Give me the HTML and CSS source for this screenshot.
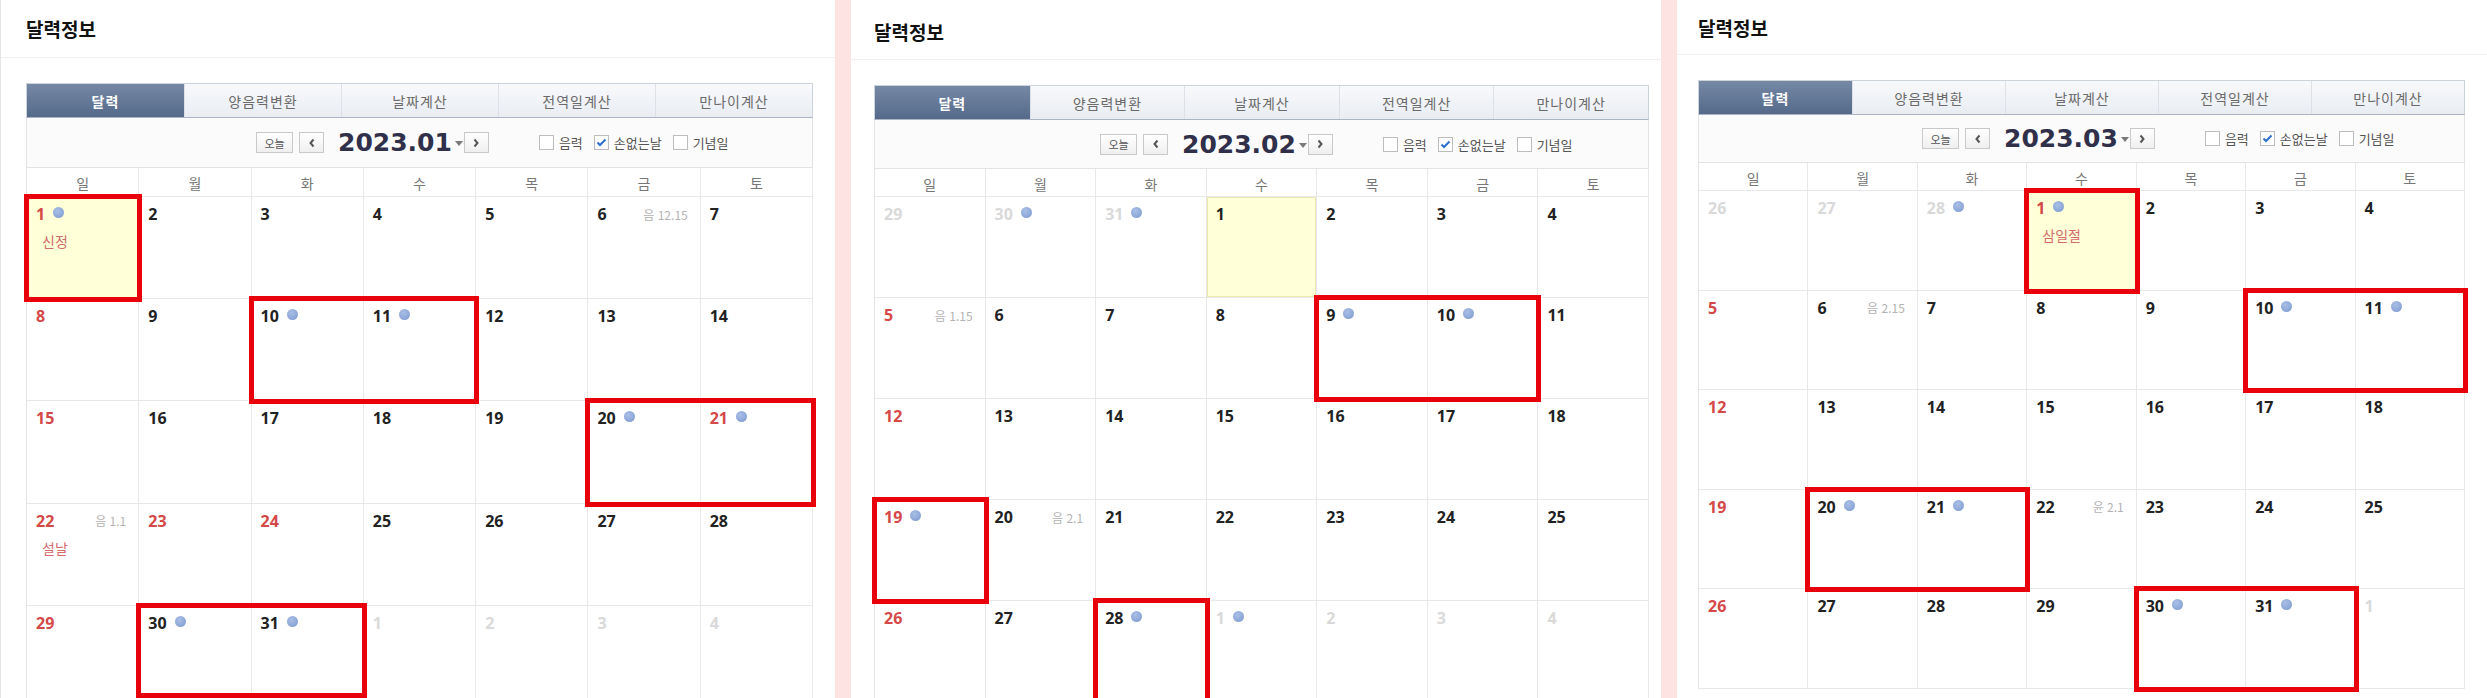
FILE: index.html
```html
<!DOCTYPE html>
<html lang="ko">
    <head>
        <meta charset="UTF-8" />
        <meta name="viewport" content="width=device-width, initial-scale=1.0" />
        <title>달력정보</title>
        <link rel="stylesheet" href="styles.css">
    </head>
    <body>
        <div class="board">
            <section class="panel panel-jan" data-year="2023" data-month="1"></section>
            <section class="panel panel-feb" data-year="2023" data-month="2"></section>
            <section class="panel panel-mar" data-year="2023" data-month="3"></section>
        </div>

        <!-- 패널 하나의 틀 -->
        <template id="panel-tpl">
            <h2 class="panel-title">달력정보</h2>
            <div class="panel-body">
                <ul class="tabs">
                    <li class="tab active">달력</li>
                    <li class="tab">양음력변환</li>
                    <li class="tab">날짜계산</li>
                    <li class="tab">전역일계산</li>
                    <li class="tab">만나이계산</li>
                </ul>
                <div class="toolbar">
                    <button class="btn btn-today">오늘</button>
                    <button class="btn btn-arrow btn-prev">
                        <svg width="8" height="10" viewBox="0 0 8 10"><polyline points="5.5,1.5 2.5,5 5.5,8.5" fill="none" stroke="#555" stroke-width="2" /></svg>
                    </button>
                    <strong class="cur-month"></strong>
                    <span class="caret"></span>
                    <button class="btn btn-arrow">
                        <svg width="8" height="10" viewBox="0 0 8 10"><polyline points="2.5,1.5 5.5,5 2.5,8.5" fill="none" stroke="#555" stroke-width="2" /></svg>
                    </button>
                    <div class="options">
                        <span class="opt"><span class="chk"></span>음력</span>
                        <span class="opt">
                            <span class="chk">
                                <svg width="11" height="9" viewBox="0 0 11 9"><polyline points="1.5,4.5 4,7 9.5,1.5" fill="none" stroke="#2d6fcb" stroke-width="2" /></svg>
                            </span>손없는날
                        </span>
                        <span class="opt"><span class="chk"></span>기념일</span>
                    </div>
                </div>
                <div class="weekdays">
                    <span>일</span><span>월</span><span>화</span><span>수</span><span>목</span><span>금</span><span>토</span>
                </div>
                <div class="month">
                    <div class="days"></div>
                    <div class="marks"></div>
                </div>
            </div>
        </template>

        <script>
            // 손없는날
            const dots = new Set([
                "1-1", "1-10", "1-11", "1-20", "1-21", "1-30", "1-31",
                "2-9", "2-10", "2-19", "2-28",
                "3-1", "3-10", "3-11", "3-20", "3-21", "3-30", "3-31",
            ]);
            // 공휴일
            const redDays = new Set(["1-1", "1-21", "1-22", "1-23", "1-24", "3-1"]);
            const holidayNames = { "1-1": "신정", "1-22": "설날", "3-1": "삼일절" };
            const lunar = {
                "1-6": "음 12.15", "1-22": "음 1.1",
                "2-5": "음 1.15", "2-20": "음 2.1",
                "3-6": "음 2.15", "3-22": "윤 2.1",
            };
            // 빨간 박스 표시: [행, 열, 칸수, 추가클래스]
            const marks = {
                1: [[1, 1, 1], [2, 3, 2], [3, 6, 2], [5, 2, 2, "short"]],
                2: [[2, 5, 2], [4, 1, 1], [5, 3, 1]],
                3: [[1, 4, 1], [2, 6, 2], [4, 2, 2], [5, 5, 2]],
            };

            const tpl = document.getElementById("panel-tpl");

            document.querySelectorAll(".panel").forEach((panel) => {
                const year = Number(panel.dataset.year);
                const month = Number(panel.dataset.month);
                panel.appendChild(tpl.content.cloneNode(true));
                panel.querySelector(".cur-month").textContent =
                    year + "." + String(month).padStart(2, "0");

                const days = panel.querySelector(".days");
                const first = new Date(year, month - 1, 1);
                const startDay = 1 - first.getDay();

                for (let i = 0; i < 35; i++) {
                    const d = new Date(year, month - 1, startDay + i);
                    const key = d.getMonth() + 1 + "-" + d.getDate();
                    const inMonth = d.getMonth() === month - 1;

                    const cell = document.createElement("div");
                    cell.className = "cell";
                    if (!inMonth) cell.classList.add("other");
                    else if (d.getDay() === 0 || redDays.has(key)) cell.classList.add("red");
                    if (inMonth && d.getDate() === 1) cell.classList.add("today");

                    let html = '<div class="top"><span class="num">' + d.getDate() + "</span>";
                    if (dots.has(key)) html += '<span class="dot"></span>';
                    if (inMonth && lunar[key]) html += '<span class="lunar">' + lunar[key] + "</span>";
                    html += "</div>";
                    if (inMonth && holidayNames[key]) html += '<div class="hname">' + holidayNames[key] + "</div>";
                    cell.innerHTML = html;
                    days.appendChild(cell);
                }

                const markBox = panel.querySelector(".marks");
                marks[month].forEach(([row, col, span, extra]) => {
                    const box = document.createElement("div");
                    box.className = "mark" + (extra ? " " + extra : "");
                    box.style.gridArea = row + " / " + col + " / " + (row + 1) + " / " + (col + span);
                    markBox.appendChild(box);
                });
            });
        </script>
    </body>
</html>
```

FILE: styles.css
```css
* {
    box-sizing: border-box;
}

body {
    margin: 0;
    background-color: #fde3e1;
    font-family: "Noto Sans CJK KR", sans-serif;
    overflow: hidden;
}

.board {
    display: flex;
    gap: 16px;
    height: 698px;
}

.panel {
    flex: none;
    width: var(--w);
    height: 100%;
    background-color: #fff;
    overflow: hidden;
}

/* 캡처마다 크기가 조금씩 다름 */
.panel-jan {
    --w: 835px;
    --pl: 25px;
    --pr: 22px;
    --head-h: 58px;
    --head-pt: 0px;
    --bar-h: 50px;
    --wk-h: 29px;
    --row-h: 102.2px;
    --nav-x: 229px;
    border-left: 1px solid #e6e6e6;
}

.panel-feb {
    --w: 810px;
    --pl: 23px;
    --pr: 12px;
    --head-h: 60px;
    --head-pt: 4px;
    --bar-h: 49px;
    --wk-h: 28px;
    --row-h: 101px;
    --nav-x: 225px;
}

.panel-mar {
    --w: 810px;
    --pl: 21px;
    --pr: 22px;
    --head-h: 55px;
    --head-pt: 0px;
    --bar-h: 48px;
    --wk-h: 28px;
    --row-h: 99.6px;
    --nav-x: 223px;
}

.panel-title {
    margin: 0;
    height: var(--head-h);
    padding: var(--head-pt) 0 0 var(--pl);
    display: flex;
    align-items: center;
    border-bottom: 1px solid #f1f1f1;
    font-size: 19px;
    font-weight: 700;
    color: #111;
}

.panel-body {
    padding: 25px var(--pr) 0 var(--pl);
}

/* 탭 */
.tabs {
    display: grid;
    grid-template-columns: repeat(5, minmax(0, 1fr));
    height: 35px;
    margin: 0;
    padding: 0;
    list-style: none;
    border: 1px solid #cdd3db;
    border-bottom-color: #aab4c2;
}

.tab {
    display: flex;
    align-items: center;
    justify-content: center;
    border-left: 1px solid #dde1e7;
    background: linear-gradient(#f8f9fb, #e9edf2);
    color: #6b6b6b;
    font-size: 14px;
    letter-spacing: 1px;
}

.tab:first-child {
    border-left: none;
}

.tab.active {
    background: linear-gradient(#7589a5, #55698a);
    color: #fff;
    font-weight: 700;
}

/* 월 이동 바 */
.toolbar {
    display: flex;
    align-items: center;
    height: var(--bar-h);
    padding-left: var(--nav-x);
    border: 1px solid #e3e3e3;
    border-top: none;
    background-color: #fbfbfb;
}

.btn {
    display: flex;
    align-items: center;
    justify-content: center;
    height: 21px;
    padding: 0;
    border: 1px solid #c9c9c9;
    background: linear-gradient(#fff, #efefef);
}

.btn-today {
    width: 37px;
    margin-right: 6px;
    font: 11px "Noto Sans CJK KR", sans-serif;
    color: #555;
}

.btn-arrow {
    width: 25px;
}

.btn-prev {
    margin-right: 14px;
}

.cur-month {
    font: 700 25px/1 "DejaVu Sans", sans-serif;
    color: #30304a;
}

.caret {
    width: 0;
    height: 0;
    margin: 2px 1px 0 3px;
    border-left: 4px solid transparent;
    border-right: 4px solid transparent;
    border-top: 5px solid #7a7a7a;
}

.options {
    display: flex;
    align-items: center;
    margin-left: 50px;
    font-size: 13px;
    color: #555;
}

.opt {
    display: flex;
    align-items: center;
    margin-right: 11px;
}

.chk {
    display: flex;
    align-items: center;
    justify-content: center;
    width: 15px;
    height: 15px;
    margin-right: 5px;
    border: 1px solid #bdbdbd;
    background-color: #fff;
}

/* 요일 */
.weekdays {
    display: grid;
    grid-template-columns: repeat(7, minmax(0, 1fr));
    height: var(--wk-h);
    border-left: 1px solid #e3e3e3;
}

.weekdays span {
    display: flex;
    align-items: center;
    justify-content: center;
    padding-top: 2px;
    border-right: 1px solid #e8e8e8;
    border-bottom: 1px solid #e8e8e8;
    font-size: 14px;
    color: #777;
}

/* 날짜 칸 */
.month {
    display: grid;
    border-left: 1px solid #e3e3e3;
}

.days,
.marks {
    grid-area: 1 / 1;
    display: grid;
    grid-template-columns: repeat(7, minmax(0, 1fr));
    grid-auto-rows: var(--row-h);
}

.marks {
    grid-template-rows: repeat(5, var(--row-h));
    pointer-events: none;
}

.cell {
    padding: 7px 12px 0 9px;
    border-right: 1px solid #e8e8e8;
    border-bottom: 1px solid #e8e8e8;
}

.cell.today {
    background-color: #ffffd8;
    box-shadow: inset 0 0 0 1px #ebe6b2;
}

.top {
    display: flex;
    align-items: center;
    height: 20px;
}

.num {
    font: 700 16px "Open Sans", sans-serif;
    color: #222;
}

.red .num {
    color: #d44848;
}

.other .num {
    color: #d9d9d9;
}

.dot {
    width: 11px;
    height: 11px;
    margin: -3px 0 0 8px;
    border-radius: 50%;
    background: radial-gradient(circle at 40% 35%, #a9bfe6, #7b99cf);
}

.lunar {
    margin-left: auto;
    font-size: 12px;
    color: #b3b3b3;
}

.hname {
    margin: 7px 0 0 6px;
    font-size: 14px;
    line-height: 20px;
    color: #d26c6c;
}

/* 빨간 표시 박스 */
.mark {
    margin: -3px;
    border: 5px solid #e8000a;
}

.mark.short {
    margin-bottom: 10px;
}
```
